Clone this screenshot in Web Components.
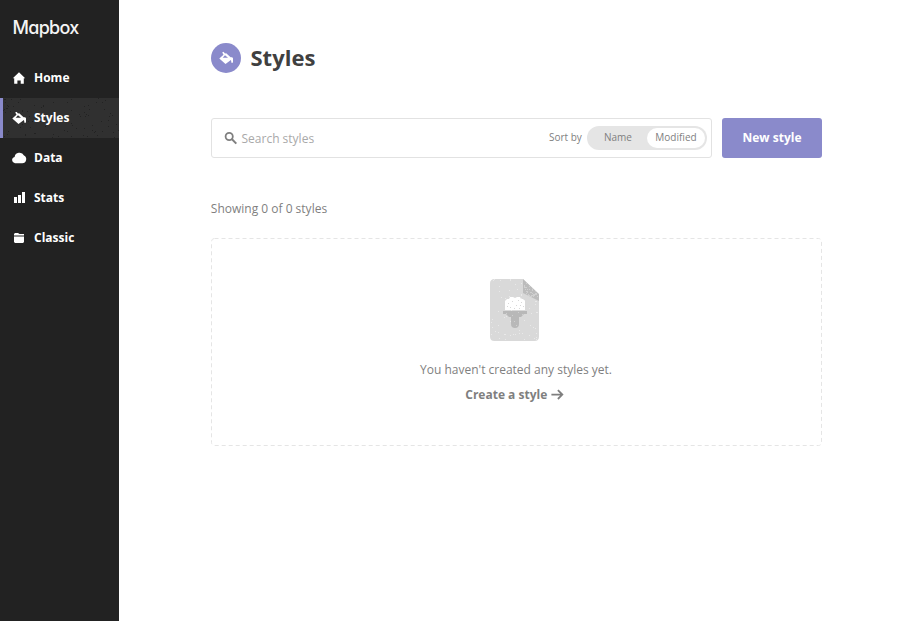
<!DOCTYPE html>
<html lang="en">
<head>
<meta charset="utf-8">
<title>Styles | Mapbox</title>
<style>
body{margin:0;background:#fff;font:12px/20px "Open Sans","Noto Sans",sans-serif;color:#7f7f7f}
</style>
</head>
<body>
<app-shell></app-shell>
<script>
const icons = {
  home: '<path d="M9 3.2 15.2 9.2H13.8V14.8H10.7V11.4H7.4V14.8H4.2V9.200H2.800Z"/>',
  paint: '<path fill-rule="evenodd" d="M5.200 3.500 6.500 2.700 8 4.500 9.200 4.300 13.600 8.300H15.200L16 9.300V13.500L14.600 14 13.900 11 8.500 15 2.300 9.500 6.500 5.700ZM8 6.200 5.700 8.700H11Z"/>',
  cloud: '<path d="M5 14.3A3.2 3.2 0 0 1 4.6 8 5 5 0 0 1 14 6.400 4.200 4.200 0 0 1 12.200 14.300Z"/>',
  stats: '<path d="M4 8h3v6H4zM8 6h3v8H8zM12 3h3v11h-3z"/>',
  folder: '<path d="M4 5 5 4H8L9.500 5H14V6.500H4zM4 7.500h10v5.500l-1 1H5l-1-1z"/>',
  search: '<path fill="none" stroke="currentColor" stroke-width="2" d="M9.500 9.800 14.300 14.600"/><circle cx="7.200" cy="7.500" r="3.600" fill="none" stroke="currentColor" stroke-width="1.800"/>',
  arrow: '<path fill="none" stroke="currentColor" stroke-width="2" d="M2.700 8.500H15M10 3.500 15 8.500 10 13.500"/>'
};
class UiIcon extends HTMLElement {
  connectedCallback() {
    this.attachShadow({mode:'open'}).innerHTML = `<style>:host{display:block;width:18px;height:18px;flex:none}svg{display:block;width:100%;height:100%;fill:currentColor}</style><svg viewBox="0 0 18 18">${icons[this.getAttribute('name')]}</svg>`;
  }
}
class NavItem extends HTMLElement {
  connectedCallback() {
    let grain = '';
    if (this.hasAttribute('active')) {
      let s = 7;
      const next = n => (s = (s * 16807) % 2147483647) % n;
      for (let i = 0; i < 95; i++) grain += `M${3 + next(116)} ${next(40)}h1v1h-1z`;
    }
    this.attachShadow({mode:'open'}).innerHTML = `<style>
:host{display:grid;height:40px;color:#fff;font-weight:700}
.row,svg{grid-area:1/1}
svg{display:block;width:119px;height:40px;fill:#222}
.row{display:flex;align-items:center;gap:6px;padding-left:10px}
:host([active]){background:linear-gradient(90deg,#8a8acb 3px,#303030 3px)}
</style><svg>${grain ? `<path d="${grain}"/>` : ''}</svg><div class="row"><ui-icon name="${this.getAttribute('icon')}"></ui-icon><span><slot></slot></span></div>`;
  }
}
class SideBar extends HTMLElement {
  connectedCallback() {
    this.attachShadow({mode:'open'}).innerHTML = `<style>
:host{display:block;background:#222;width:119px}
.logo{height:58px;box-sizing:border-box;padding:18px 0 0 12.500px;color:#f4f4f4;font:500 18px/20px Inter,Lato,sans-serif;font-feature-settings:"cv11";letter-spacing:-.7px}
</style><div class="logo">Mapbox</div><nav>
<nav-item icon="home">Home</nav-item><nav-item icon="paint" active>Styles</nav-item><nav-item icon="cloud">Data</nav-item><nav-item icon="stats">Stats</nav-item><nav-item icon="folder">Classic</nav-item></nav>`;
  }
}
class PageTitle extends HTMLElement {
  connectedCallback() {
    this.attachShadow({mode:'open'}).innerHTML = `<style>
:host{display:flex;align-items:center;gap:9.500px;height:30px}
.disc{width:30px;height:30px;border-radius:50%;background:#8a8acb;color:#fff;display:grid;place-items:center}
h1{margin:0;padding-bottom:2px;font-size:22px;line-height:28px;color:#404040}
</style><div class="disc"><ui-icon name="paint"></ui-icon></div><h1><slot></slot></h1>`;
  }
}
class SortToggle extends HTMLElement {
  connectedCallback() {
    this.attachShadow({mode:'open'}).innerHTML = `<style>
:host{display:flex;align-items:center;font-size:10px;line-height:18px;color:#7f7f7f}
.label{padding-bottom:2px}
.pill{display:flex;box-sizing:border-box;width:120px;height:24px;margin-left:5.200px;padding:2px;border-radius:12px;background:#e5e5e5}
.pill span{flex:1;text-align:center;height:20px}
.pill .on{background:#fff;border-radius:10px}
</style><span class="label">Sort by</span><div class="pill"><span>Name</span><span class="on">Modified</span></div>`;
  }
}
class SearchBar extends HTMLElement {
  connectedCallback() {
    this.attachShadow({mode:'open'}).innerHTML = `<style>
:host{display:flex;gap:10px;height:40px}
.field{flex:1;box-sizing:border-box;border:1px solid #e2e2e2;border-radius:3px;display:flex;align-items:center;padding:0 4px 0 10px;color:#a9a9a9}
.field>span{padding-top:2px}
ui-icon{color:#7f7f7f;margin-right:1.500px}
sort-toggle{margin-left:auto}
.btn{width:100px;border:0;border-radius:3px;background:#8a8acb;color:#fff;font:inherit;font-weight:700;padding:0}
</style><div class="field"><ui-icon name="search"></ui-icon><span>Search styles</span><sort-toggle></sort-toggle></div><button class="btn">New style</button>`;
  }
}
class StyleDocument extends HTMLElement {
  connectedCallback() {
    let s = 41, dots = '';
    const next = n => (s = (s * 16807) % 2147483647) % n;
    for (let i = 0; i < 75; i++) dots += `M${1 + next(47)} ${next(61)}h1v1h-1z`;
    let fold = '';
    for (let y = 3; y < 21; y++) for (let x = 34; x < 48; x++) if (x - 33 < y + 1 && y < 14 + (x - 33) / 2 && next(4) === 0) fold += `M${x} ${y}h1v1h-1z`;
    this.attachShadow({mode:'open'}).innerHTML = `<style>:host{display:block;width:50px;height:62px}svg{display:block}</style>
<svg width="50" height="62" viewBox="0 0 50 62">
<clipPath id="c"><path d="M4.500 0H33L49 16V57.500Q49 62 44.500 62H4.500Q0 62 0 57.500V4.500Q0 0 4.500 0Z"/></clipPath>
<g clip-path="url(#c)"><path fill="#d9d9d9" d="M0 0h50v62H0z"/><path fill="#e9e9e9" d="${dots}"/></g>
<path fill="#bcbcbc" d="M33 0 49 15V22L33 14Z"/><path fill="#d0d0d0" clip-path="url(#c)" d="${fold}"/>
<path fill="#fff" d="M15 31V22L17 20H19L20 18H23L25 19 27 18H30L31 20H33L35 22V31Z"/>
<path fill="#d8d8d8" d="M18 24h1v1h-1zM22 22h1v1h-1zM26 26h1v1h-1zM31 23h1v1h-1zM20 28h1v1h-1zM29 29h1v1h-1zM24 29h1v1h-1zM33 27h1v1h-1zM17 27h1v1h-1zM28 21h1v1h-1zM30 26h1v1h-1z"/>
<path fill="#b8b8b8" d="M13 32H37V35H34L31 38H29V45Q29 49 25 49T21 45V38H19L16 35H13Z"/>
<path fill="#cfcfcf" d="M16 34h1v1h-1zM22 36h1v1h-1zM28 33h1v1h-1zM32 35h1v1h-1zM24 42h1v1h-1zM26 46h1v1h-1z"/>
</svg>`;
  }
}
class EmptyState extends HTMLElement {
  connectedCallback() {
    this.attachShadow({mode:'open'}).innerHTML = `<style>
:host{display:grid;height:208px;color:#7f7f7f}
.frame,.content{grid-area:1/1}
.frame{display:block;width:611px;height:208px}
.content{display:flex;flex-direction:column;align-items:center;padding-top:41px}
style-document{margin-right:3px}
p{margin:19px 1px 5px 0}
a{display:flex;align-items:center;gap:2px;margin-right:2.500px;font-weight:700;color:#7f7f7f}
a ui-icon{width:16px;height:16px}
</style><svg class="frame"><rect x=".5" y=".5" width="610" height="207" rx="3" fill="none" stroke="#e5e5e5" stroke-dasharray="4 3"/></svg>
<div class="content"><style-document></style-document><p>You haven't created any styles yet.</p><a>Create a style<ui-icon name="arrow"></ui-icon></a></div>`;
  }
}
class AppShell extends HTMLElement {
  connectedCallback() {
    this.attachShadow({mode:'open'}).innerHTML = `<style>
:host{display:flex;width:900px;height:621px;overflow:hidden}
main{display:flex;flex-direction:column;width:611px;padding:43px 0 0 92px}
search-bar{margin-top:45px}
.count{margin:41px 0 19px -.2px}
</style><side-bar></side-bar><main><page-title>Styles</page-title><search-bar></search-bar><div class="count">Showing 0 of 0 styles</div><empty-state></empty-state></main>`;
  }
}
for (const [n, c] of Object.entries({'ui-icon':UiIcon,'nav-item':NavItem,'side-bar':SideBar,'page-title':PageTitle,'sort-toggle':SortToggle,'search-bar':SearchBar,'style-document':StyleDocument,'empty-state':EmptyState,'app-shell':AppShell})) customElements.define(n, c);
</script>
</body>
</html>
